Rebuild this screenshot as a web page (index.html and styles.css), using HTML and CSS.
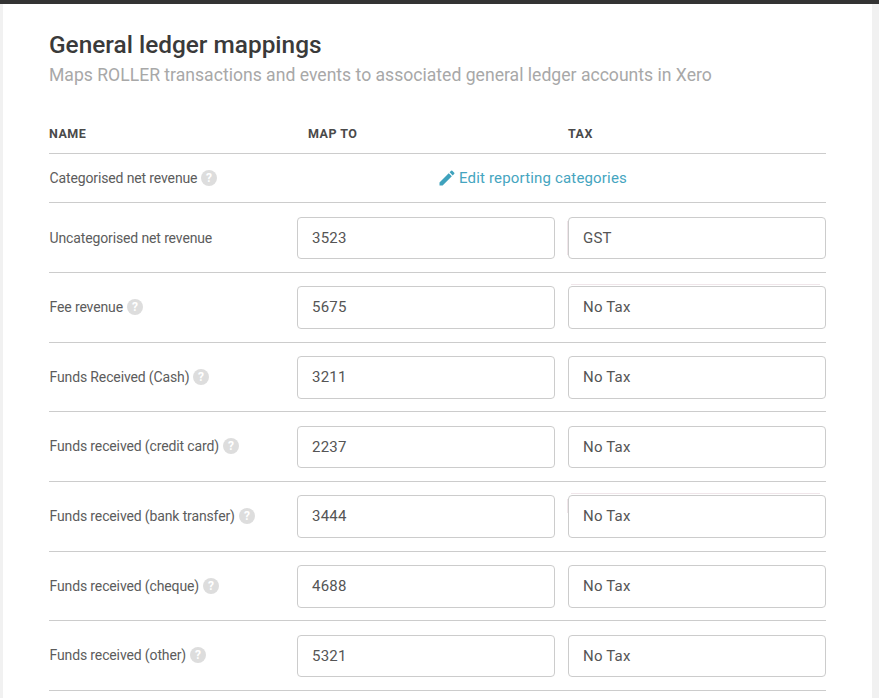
FILE: index.html
```html
<!DOCTYPE html>
<html lang="en">
<head>
<meta charset="utf-8">
<title>General ledger mappings</title>
<link rel="stylesheet" href="styles.css">
</head>
<body>
<main class="card">
  <h1 class="title">General ledger mappings</h1>
  <p class="subtitle">Maps ROLLER transactions and events to associated general ledger accounts in Xero</p>
  <div class="head">
    <span>NAME</span><span class="head-map">MAP TO</span><span>TAX</span>
  </div>
  <div class="row row-first">
    <span class="name">Categorised net revenue <svg class="help" viewBox="0 0 16 16"><circle cx="8" cy="8" r="8"/><text x="8" y="12" text-anchor="middle">?</text></svg></span>
    <a class="edit" href="#"><svg class="pencil" viewBox="0 0 24 24"><path d="M3 17.25V21h3.75L17.81 9.94l-3.75-3.75L3 17.25zM20.71 7.04a1 1 0 0 0 0-1.41l-2.34-2.34a1 1 0 0 0-1.41 0l-1.83 1.83 3.75 3.75 1.83-1.83z"/></svg>Edit reporting categories</a>
  </div>
  <div class="row">
    <span class="name">Uncategorised net revenue</span>
    <div class="field">3523</div><div class="field ghost-left">GST</div>
  </div>
  <div class="row">
    <span class="name">Fee revenue <svg class="help" viewBox="0 0 16 16"><circle cx="8" cy="8" r="8"/><text x="8" y="12" text-anchor="middle">?</text></svg></span>
    <div class="field">5675</div><div class="field ghost-top">No Tax</div>
  </div>
  <div class="row">
    <span class="name">Funds Received (Cash) <svg class="help" viewBox="0 0 16 16"><circle cx="8" cy="8" r="8"/><text x="8" y="12" text-anchor="middle">?</text></svg></span>
    <div class="field">3211</div><div class="field">No Tax</div>
  </div>
  <div class="row">
    <span class="name">Funds received (credit card) <svg class="help" viewBox="0 0 16 16"><circle cx="8" cy="8" r="8"/><text x="8" y="12" text-anchor="middle">?</text></svg></span>
    <div class="field">2237</div><div class="field">No Tax</div>
  </div>
  <div class="row">
    <span class="name">Funds received (bank transfer) <svg class="help" viewBox="0 0 16 16"><circle cx="8" cy="8" r="8"/><text x="8" y="12" text-anchor="middle">?</text></svg></span>
    <div class="field">3444</div><div class="field ghost-top ghost-left ghost-short">No Tax</div>
  </div>
  <div class="row">
    <span class="name">Funds received (cheque) <svg class="help" viewBox="0 0 16 16"><circle cx="8" cy="8" r="8"/><text x="8" y="12" text-anchor="middle">?</text></svg></span>
    <div class="field">4688</div><div class="field">No Tax</div>
  </div>
  <div class="row">
    <span class="name">Funds received (other) <svg class="help" viewBox="0 0 16 16"><circle cx="8" cy="8" r="8"/><text x="8" y="12" text-anchor="middle">?</text></svg></span>
    <div class="field">5321</div><div class="field">No Tax</div>
  </div>
</main>
</body>
</html>
```
FILE: styles.css
```css
* { box-sizing: border-box; }
html, body { height: 100%; }
body {
  margin: 0;
  background: #f1f1f1;
  border-top: 4px solid #333;
  font-family: Roboto, "Liberation Sans", sans-serif;
  color: #444;
  overflow: hidden;
}
.card {
  background: #fff;
  margin: 0 7px 0 3px;
  padding: 26px 46px 0;
  height: 100%;
}
.title {
  margin: 0;
  font-size: 24.4px;
  line-height: 30px;
  font-weight: 500;
  color: #3a3a3a;
}
.subtitle {
  margin: 3px 0 0;
  font-size: 17.6px;
  line-height: 24px;
  color: #a8a8a8;
}
.head {
  display: grid;
  grid-template-columns: 248px 271px 258px;
  margin-top: 30px;
  height: 37px;
  padding-top: 7px;
  border-bottom: 1px solid #ccc;
  font-size: 12.5px;
  line-height: 20px;
  font-weight: 700;
  letter-spacing: 0.5px;
  color: #4a4a4a;
}
.head-map { padding-left: 11px; }
.row {
  display: grid;
  grid-template-columns: 235px 258px 258px;
  column-gap: 13px;
  align-items: center;
  height: 69.65px;
  padding-top: 1px;
  border-bottom: 1px solid #ccc;
}
.row-first { height: 49.3px; padding-top: 0; }
.name {
  display: flex;
  align-items: center;
  gap: 4px;
  padding-left: 0.5px;
  padding-bottom: 1.2px;
  font-size: 14px;
  letter-spacing: -0.13px;
  color: #5c5c5c;
  white-space: nowrap;
}
.help { width: 16px; height: 16px; flex: none; }
.help circle { fill: #ddd; }
.help text {
  fill: #fff;
  font-family: Roboto, sans-serif;
  font-size: 12px;
  font-weight: 700;
}
.edit {
  grid-column: 2 / 4;
  justify-self: start;
  margin-left: 140px;
  display: flex;
  align-items: center;
  gap: 2px;
  font-size: 15px;
  letter-spacing: 0.17px;
  color: #45a5c0;
  text-decoration: none;
}
.pencil { width: 20px; height: 20px; fill: #3fa2bd; }
.field {
  position: relative;
  height: 42.6px;
  padding: 0 14px 0.6px;
  display: flex;
  align-items: center;
  border: 1px solid #ccc;
  border-radius: 4px;
  font-size: 15px;
  letter-spacing: 0.2px;
  color: #555;
  background: #fff;
}
.ghost-left::before {
  content: "";
  position: absolute;
  left: -2px;
  top: 3px;
  bottom: 3px;
  width: 1px;
  background: #f0e6ea;
}
.ghost-top::after {
  content: "";
  position: absolute;
  left: 2px;
  right: 5px;
  top: -3px;
  height: 1px;
  background: #f0e6ea;
}
.ghost-short::before { bottom: 24px; }
```
